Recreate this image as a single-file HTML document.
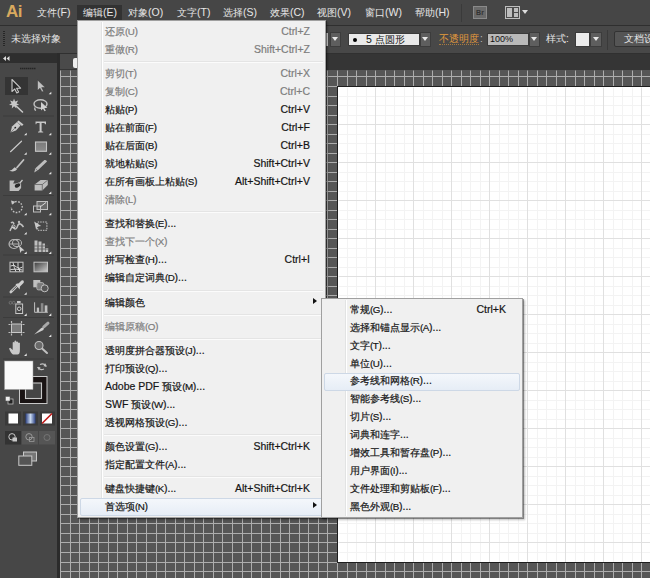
<!DOCTYPE html><html><head><meta charset="utf-8"><style>
*{margin:0;padding:0;box-sizing:border-box}
html,body{width:650px;height:578px;overflow:hidden;background:#3a3a3a;font-family:"Liberation Sans",sans-serif;position:relative}
i{font-style:normal}
.a{position:absolute}
.c{font-size:9.8px}
.p{font-size:9.8px;letter-spacing:-0.4px}
#menubar{left:0;top:0;width:650px;height:26px;background:#464646;border-bottom:1px solid #2f2f2f}
.mb{position:absolute;top:5px;height:15px;line-height:15px;font-size:10.5px;color:#e6e6e6;white-space:nowrap}
#ctrl{left:0;top:26px;width:650px;height:28px;background:#484848;border-bottom:1px solid #303030}
#tabbar{left:59px;top:54px;width:591px;height:16px;background:#353535}
#tools{left:0;top:54px;width:57px;height:524px;background:#474747}
#toolhead{left:0;top:54px;width:57px;height:9px;background:#2f2f2f}
#gap{left:57px;top:53px;width:3px;height:525px;background:#2b2b2b}
#paste{left:60px;top:70px;width:590px;height:508px;background-color:#565656}
#art{left:337px;top:86px;width:314px;height:477px;background-color:#fff;border:1px solid #1e1e1e}
.menu{position:absolute;background:#f0f0f0;border:1px solid #a0a0a0;box-shadow:1px 1px 0 rgba(0,0,0,.35),2px 2px 2px rgba(0,0,0,.25)}
.gut{position:absolute;top:1px;bottom:1px;width:2px;border-left:1px solid #e2e3e3;border-right:1px solid #fff}
.row{position:absolute;height:17px;line-height:17px;font-size:10.5px;color:#151515;white-space:nowrap;-webkit-text-stroke:0.2px currentColor}
.row.d{color:#7d7d7d}
.sc{position:absolute;top:0;font-size:10.5px}
.sep{position:absolute;height:2px;border-top:1px solid #e4e4e4;border-bottom:1px solid #fbfbfb}
.hl{position:absolute;height:18px;border:1px solid #cdd8e6;border-radius:2px;background:linear-gradient(#f4f7fb,#e6edf6)}
.arr{position:absolute;width:0;height:0;border-top:3.5px solid transparent;border-bottom:3.5px solid transparent;border-left:4px solid #111}
</style></head><body>
<div id="menubar" class="a">
<div class="a" style="left:6px;top:3px;font-size:17px;font-weight:bold;color:#d8a95e;line-height:18px;letter-spacing:-0.5px">Ai</div>
<div class="a" style="left:77px;top:5px;width:45px;height:15px;background:#323232"></div>
<div class="mb" style="left:37px"><i class="c">文件</i>(F)</div>
<div class="mb" style="left:83px"><i class="c">编辑</i>(E)</div>
<div class="mb" style="left:128px"><i class="c">对象</i>(O)</div>
<div class="mb" style="left:177px"><i class="c">文字</i>(T)</div>
<div class="mb" style="left:223px"><i class="c">选择</i>(S)</div>
<div class="mb" style="left:270px"><i class="c">效果</i>(C)</div>
<div class="mb" style="left:317px"><i class="c">视图</i>(V)</div>
<div class="mb" style="left:365px"><i class="c">窗口</i>(W)</div>
<div class="mb" style="left:415px"><i class="c">帮助</i>(H)</div>
<div class="a" style="left:461px;top:4px;width:1px;height:18px;background:#3a3a3a"></div>
<div class="a" style="left:473px;top:6px;width:14px;height:13px;background:#6a6a6a;border:1px solid #8a8a8a;font-size:7px;color:#333;text-align:center;line-height:11px;font-weight:bold">Br</div>
<div class="a" style="left:505px;top:6px;width:15px;height:13px;border:1px solid #bdbdbd;background:#4b4b4b"></div>
<div class="a" style="left:507px;top:8px;width:5px;height:9px;background:#bdbdbd"></div>
<div class="a" style="left:514px;top:8px;width:4px;height:4px;background:#bdbdbd"></div>
<div class="a" style="left:514px;top:13px;width:4px;height:4px;background:#bdbdbd"></div>
<div class="arr" style="left:522px;top:10px;border-left:3px solid transparent;border-right:3px solid transparent;border-top:4px solid #ddd;border-bottom:0"></div>
</div>
<div id="ctrl" class="a">
<div class="a" style="left:3px;top:5px;width:2px;height:16px;background:repeating-linear-gradient(#262626 0 1px,#4a4a4a 1px 2px)"></div>
<div class="a" style="left:11px;top:5px;height:16px;line-height:16px;color:#e4e4e4;font-size:10px;white-space:nowrap">未选择对象</div>
<div class="a" style="left:322px;top:7px;width:6px;height:13px;background:#cfcfcf"></div>
<div class="a" style="left:330px;top:6px;width:11px;height:15px;background:#5e5e5e;border:1px solid #3c3c3c"></div><div class="arr" style="left:332px;top:11px;border-left:3px solid transparent;border-right:3px solid transparent;border-top:4px solid #e8e8e8;border-bottom:0"></div>
<div class="a" style="left:348px;top:7px;width:72px;height:13px;background:#e9e9e9;border:1px solid #3a3a3a"></div>
<div class="a" style="left:353px;top:12px;width:4px;height:4px;border-radius:50%;background:#000"></div>
<div class="a" style="left:366px;top:7px;height:13px;line-height:13px;font-size:10.5px;color:#111;white-space:nowrap">5 <i class="c">点圆形</i></div>
<div class="a" style="left:420px;top:6px;width:11px;height:15px;background:#5e5e5e;border:1px solid #3c3c3c"></div><div class="arr" style="left:422px;top:11px;border-left:3px solid transparent;border-right:3px solid transparent;border-top:4px solid #e8e8e8;border-bottom:0"></div>
<div class="a" style="left:439px;top:5px;height:16px;line-height:15px;font-size:10px;color:#e39a3c;white-space:nowrap">不透明度</div>
<div class="a" style="left:439px;top:18px;width:40px;height:1px;border-top:1px dotted #a87a40"></div>
<div class="a" style="left:480px;top:5px;height:16px;line-height:15px;font-size:10px;color:#bbb">:</div>
<div class="a" style="left:487px;top:7px;width:42px;height:13px;background:#b9b9b9;border:1px solid #3a3a3a;font-size:9px;line-height:11px;color:#111;padding-left:2px">100%</div>
<div class="a" style="left:529px;top:6px;width:11px;height:15px;background:#5e5e5e;border:1px solid #3c3c3c"></div><div class="arr" style="left:531px;top:11px;border-left:3px solid transparent;border-right:3px solid transparent;border-top:4px solid #e8e8e8;border-bottom:0"></div>
<div class="a" style="left:546px;top:5px;height:16px;line-height:16px;font-size:10px;color:#e4e4e4;white-space:nowrap">样式:</div>
<div class="a" style="left:575px;top:6px;width:15px;height:15px;background:#ececec;border:1px solid #3a3a3a"></div>
<div class="a" style="left:590px;top:6px;width:12px;height:15px;background:#5e5e5e;border:1px solid #3c3c3c"></div><div class="arr" style="left:593px;top:11px;border-left:3px solid transparent;border-right:3px solid transparent;border-top:4px solid #e8e8e8;border-bottom:0"></div>
<div class="a" style="left:607px;top:4px;width:1px;height:20px;background:#3a3a3a"></div>
<div class="a" style="left:614px;top:5px;width:50px;height:16px;background:#555;border:1px solid #333;border-radius:2px"></div>
<div class="a" style="left:624px;top:5px;height:16px;line-height:16px;font-size:10px;color:#e4e4e4;white-space:nowrap">文档设置</div>
</div>
<div id="tabbar" class="a"></div><div class="a" style="left:60px;top:54px;width:200px;height:15px;background:#4a4a4a"></div><div class="a" style="left:73px;top:58px;width:4px;height:10px;background:#eee;border-radius:2px 0 0 2px"></div>
<div id="tools" class="a"></div><div id="gap" class="a"></div>
<svg class="a" style="left:0;top:0" width="57" height="578"><rect x="0" y="54" width="57" height="9" fill="#2e2e2e"/><path d="M3 58.5l3 -2.5v5z M6.5 58.5l3 -2.5v5z" fill="#dcdcdc"/><path d="M20 68.5h16" stroke="#252525" stroke-width="1.5" stroke-dasharray="1.5 0.5"/><path d="M3 116.0h51" stroke="#3c3c3c" stroke-width="1"/><path d="M3 195.5h51" stroke="#3c3c3c" stroke-width="1"/><path d="M3 255.0h51" stroke="#3c3c3c" stroke-width="1"/><path d="M3 297.0h51" stroke="#3c3c3c" stroke-width="1"/><path d="M3 317.5h51" stroke="#3c3c3c" stroke-width="1"/><path d="M3 359.0h51" stroke="#3c3c3c" stroke-width="1"/><rect x="5" y="77" width="23" height="18" fill="#343434"/><path d="M12 79.5v12l2.8 -2.6l2 4l1.8 -0.9l-2 -3.8h4z" fill="#2a2a2a" stroke="#c8c8c8" stroke-width="1.1" stroke-linejoin="round"/><path d="M37.5 80v10.5l2.5 -2.3l2 3.8l1.6 -0.8l-1.9 -3.6h3.6z" fill="#c0c0c0" stroke="#222" stroke-width="0.4"/><path d="M48.7 94.3l2.6 -2.6v2.6z" fill="#e8e8e8"/><path d="M14 98.5l1.2 3l3 -1l-1.6 2.8l2.6 1.6l-3.2 0.4l0.4 3.2l-2.3 -2.2l-2.3 2.2l0.4 -3.2l-3.2 -0.4l2.6 -1.6l-1.6 -2.8l3 1z" fill="#c8c8c8"/><path d="M15 105l7.5 7" stroke="#c8c8c8" stroke-width="1.6" stroke-linecap="round"/><ellipse cx="40.5" cy="104" rx="6.5" ry="4.2" fill="none" stroke="#c0c0c0" stroke-width="1.4"/><path d="M35 107.5q-1 2 1 3" fill="none" stroke="#c0c0c0" stroke-width="1.2"/><path d="M41 102v8.5l2 -1.8l1.6 2.6l1.2 -0.6l-1.4 -2.6h3z" fill="#cfcfcf"/><path d="M10.5 132.5l1.5 -6l5 -4.5l3.5 3.5l-4.5 5z" fill="#c8c8c8"/><path d="M18.5 120.5l5 4l-1.5 1.6l-5 -4z" fill="#c8c8c8"/><circle cx="15.3" cy="127.6" r="0.9" fill="#222"/><path d="M10.5 132.5l4.3 -4.3" stroke="#555" stroke-width="0.6"/><path d="M24.1 135.3l2.6 -2.6v2.6z" fill="#e8e8e8"/><path d="M35.5 121.5h10.5v2.8h-1l-0.6 -1.4h-2.8v8.3l1.6 0.6v0.8h-5.2v-0.8l1.6 -0.6v-8.3h-2.8l-0.6 1.4h-0.6z" fill="#c8c8c8"/><path d="M48.7 135.3l2.6 -2.6v2.6z" fill="#e8e8e8"/><path d="M10.5 151.7l11 -10.5" stroke="#c8c8c8" stroke-width="1.2" stroke-linecap="round"/><path d="M24.1 154.8l2.6 -2.6v2.6z" fill="#e8e8e8"/><defs><linearGradient id="rg" x1="0" y1="0" x2="0" y2="1"><stop offset="0" stop-color="#7a7a7a"/><stop offset="1" stop-color="#8c8c8c"/></linearGradient><linearGradient id="gg" x1="0" y1="0" x2="1" y2="1"><stop offset="0" stop-color="#3a3a3a"/><stop offset="1" stop-color="#cfcfcf"/></linearGradient></defs><rect x="35.5" y="142" width="11" height="9.3" fill="url(#rg)" stroke="#c4c4c4" stroke-width="1.1"/><path d="M48.7 154.8l2.6 -2.6v2.6z" fill="#e8e8e8"/><path d="M23.5 160l-6.5 7.5" stroke="#c0c0c0" stroke-width="1.8" stroke-linecap="round"/><path d="M9.2 170.8q3 -0.5 5.5 -3.5l2.5 1.8q-2 3.5 -8 1.7z" fill="#c8c8c8"/><path d="M34.2 172.5l1.2 -4.2l9 -8.2q2 -0.6 2.6 1.4l-8.8 8.6z" fill="#bdbdbd"/><path d="M35.4 168.3l3.4 3.8" stroke="#5a5a5a" stroke-width="0.6"/><path d="M48.7 174.3l2.6 -2.6v2.6z" fill="#e8e8e8"/><path d="M9.6 180.5h5l-1.5 3h8v4.5l-2.5 3h-9z" fill="#bdbdbd"/><path d="M14 187.5q2 -4 6 -4.5l2.5 -3" fill="none" stroke="#c8c8c8" stroke-width="1.3"/><ellipse cx="17.5" cy="185.5" rx="3" ry="1.8" fill="#2a2a2a" transform="rotate(-25 17.5 185.5)"/><path d="M34.6 184.5l6 -4.5h7.2v5l-5.5 5.5h-7.7z" fill="#bdbdbd"/><path d="M34.6 184.5h7.7v6 M42.3 184.5l5.5 -4.5" fill="none" stroke="#555" stroke-width="0.7"/><path d="M48.7 194.0l2.6 -2.6v2.6z" fill="#e8e8e8"/><path d="M12.5 203.5a5.5 5.5 0 1 1 -1.3 3.5" fill="none" stroke="#c0c0c0" stroke-width="1.4" stroke-dasharray="1.6 1.4"/><path d="M11 200.5l4.5 1.2l-3.5 3z" fill="#c8c8c8"/><path d="M24.1 215.3l2.6 -2.6v2.6z" fill="#e8e8e8"/><rect x="37" y="201.5" width="10.5" height="8" fill="#6a6a6a" stroke="#c0c0c0" stroke-width="1"/><rect x="33.5" y="206" width="7" height="6" fill="none" stroke="#c0c0c0" stroke-width="1"/><path d="M40 207l6 -4.5" stroke="#dcdcdc" stroke-width="1"/><path d="M48.7 215.3l2.6 -2.6v2.6z" fill="#e8e8e8"/><path d="M10 231q2 -6 4 -3q2 3 4 -3q2 -3 5.5 2 M11 223q2 -2 3 1" fill="none" stroke="#c0c0c0" stroke-width="1.5"/><circle cx="13.5" cy="226.5" r="1.6" fill="none" stroke="#ddd" stroke-width="0.9"/><circle cx="19" cy="222" r="1.2" fill="#bbb"/><path d="M24.1 234.6l2.6 -2.6v2.6z" fill="#e8e8e8"/><path d="M37.7 222h9.2v8.3h-9.2z" fill="none" stroke="#c4c4c4" stroke-width="1" stroke-dasharray="1.5 1"/><path d="M34.2 221.4l7 4.5l-3.5 0.5l-1.5 3.5z" fill="#c8c8c8"/><ellipse cx="14" cy="244" rx="5" ry="4.5" fill="none" stroke="#b8b8b8" stroke-width="1.1"/><ellipse cx="17" cy="243" rx="4.5" ry="3.6" fill="none" stroke="#b8b8b8" stroke-width="1"/><path d="M9 244h10" stroke="#b8b8b8" stroke-width="0.9"/><path d="M19 245.5l5.5 5l-2.8 0.2l-1.4 2.2z" fill="#cfcfcf"/><path d="M24.1 254.0l2.6 -2.6v2.6z" fill="#e8e8e8"/><path d="M34.5 240.5h3v11.5h-3z M38.5 241.5h3v10.5h-3z M42.5 243.5h2.5v8.5h-2.5z M45.5 248h2.7v4h-2.7z" fill="#bdbdbd"/><path d="M34 246h14 M34 249h14" stroke="#5a5a5a" stroke-width="0.8"/><path d="M48.7 254.0l2.6 -2.6v2.6z" fill="#e8e8e8"/><rect x="10" y="262.2" width="13" height="9.6" fill="#3a3a3a" stroke="#c8c8c8" stroke-width="1"/><path d="M10.5 266q4 -2 6 1t6 0 M13 262.5q1 5 3 9.2 M18 262.5q-1 4 2 9.2 M10.5 269.5q5 -1 12 0.5" fill="none" stroke="#d8d8d8" stroke-width="1"/><rect x="34" y="262.2" width="13.5" height="9.6" fill="url(#gg)" stroke="#c4c4c4" stroke-width="1"/><path d="M10.8 292l7.2 -7.2" stroke="#c8c8c8" stroke-width="2.6" stroke-linecap="round"/><path d="M12 290.8l5.2 -5.2" stroke="#3a3a3a" stroke-width="0.8"/><path d="M15.5 284l3 -0.5l3 -3q1.8 -1 2.3 0.7q0.4 1.2 -0.8 2.2l-3 3l-0.5 3z" fill="#cfcfcf"/><path d="M24.1 294.8l2.6 -2.6v2.6z" fill="#e8e8e8"/><rect x="33.3" y="280" width="7" height="7.3" fill="#c0c0c0"/><rect x="36.8" y="282.6" width="7" height="7.3" rx="1.5" fill="#7a7a7a" stroke="#b5b5b5" stroke-width="0.9"/><circle cx="44.7" cy="288.3" r="3.5" fill="#555" stroke="#c0c0c0" stroke-width="1"/><circle cx="10.5" cy="302.8" r="1.4" fill="none" stroke="#888" stroke-width="0.6"/><circle cx="13.7" cy="302.8" r="1.4" fill="none" stroke="#888" stroke-width="0.6"/><rect x="17" y="301" width="3.6" height="2" fill="#c8c8c8"/><rect x="15.8" y="304" width="6.8" height="9.5" fill="#444" stroke="#c8c8c8" stroke-width="1"/><circle cx="19.2" cy="308.8" r="1.8" fill="none" stroke="#d0d0d0" stroke-width="1"/><path d="M24.1 315.9l2.6 -2.6v2.6z" fill="#e8e8e8"/><path d="M34.6 302.3v10h13.2" fill="none" stroke="#c0c0c0" stroke-width="1"/><rect x="36.8" y="307.6" width="2.3" height="4.4" fill="#c0c0c0"/><rect x="40.8" y="303.2" width="2.6" height="8.8" fill="#8a8a8a"/><rect x="44.7" y="305.4" width="2.7" height="6.6" fill="#c0c0c0"/><path d="M48.7 315.9l2.6 -2.6v2.6z" fill="#e8e8e8"/><rect x="11.5" y="324" width="10" height="8.5" fill="#7a7a7a" stroke="#c8c8c8" stroke-width="1"/><path d="M8.5 324.5h2 M22.5 324.5h2 M8.5 332.5h2 M22.5 332.5h2 M11.5 321v2 M21.5 321v2 M11.5 333.5v2 M21.5 333.5v2" stroke="#bdbdbd" stroke-width="1.2"/><path d="M34.2 334.4l7 -6.5l3.2 -1.2l-1 3.2z" fill="#cfcfcf"/><path d="M43.8 326.8l4.2 -3.6" stroke="#a8a8a8" stroke-width="3" stroke-linecap="round"/><path d="M48.7 337.0l2.6 -2.6v2.6z" fill="#e8e8e8"/><path d="M13 354.5q-2 -1 -4 -6l1.2 -0.8l2.5 2.2v-7.5q0.9 -1 1.8 0v5v-6.5q0.9 -1 1.8 0v6.5v-5.5q0.9 -1 1.8 0v5.5v-4.5q0.9 -1 1.8 0v7q0 5 -3 4.5z" fill="#c8c8c8"/><path d="M24.1 355.9l2.6 -2.6v2.6z" fill="#e8e8e8"/><path d="M41.5 348l5.5 5" stroke="#c0c0c0" stroke-width="2" stroke-linecap="round"/><circle cx="39" cy="345.5" r="4" fill="#6a6a6a" stroke="#c4c4c4" stroke-width="1.1"/><rect x="19" y="376" width="28.5" height="28" fill="#c8c8c8"/><rect x="20" y="377" width="26.5" height="26" fill="#1a1414"/><rect x="25.5" y="383" width="16" height="15.5" fill="#454545" stroke="#c8c8c8" stroke-width="1.1"/><rect x="4.5" y="361" width="28.5" height="28.5" fill="#fafafa" stroke="#9a9a9a" stroke-width="0.5"/><path d="M40 364.5q4 -2 6 2 M44 369q-4 2 -6 -2" fill="none" stroke="#c0c0c0" stroke-width="1.1"/><path d="M45 363l2 3.5l-3.5 -0.3z M39 370.5l-2 -3.5l3.5 0.3z" fill="#c0c0c0"/><rect x="8" y="399" width="5" height="5" fill="#222" stroke="#bbb" stroke-width="0.8"/><rect x="5.5" y="396.5" width="4.5" height="4.5" fill="#eee" stroke="#555" stroke-width="0.5"/><rect x="5" y="411.5" width="16" height="14" fill="#3a3a3a"/><rect x="8.5" y="413.5" width="9.5" height="10" fill="#fff"/><rect x="23" y="411.5" width="15" height="14" fill="#3a3a3a"/><defs><linearGradient id="bg2" x1="0" x2="1"><stop offset="0" stop-color="#2a3f80"/><stop offset=".5" stop-color="#c8d8f0"/><stop offset="1" stop-color="#2a3f80"/></linearGradient></defs><rect x="25.5" y="413.5" width="10" height="10" fill="url(#bg2)"/><rect x="40" y="411.5" width="15" height="14" fill="#3a3a3a"/><rect x="42" y="413.5" width="10" height="10" fill="#fff"/><path d="M42 423.5l10 -10" stroke="#c01818" stroke-width="1.6"/><rect x="5" y="431" width="16" height="13.5" fill="#333"/><rect x="22" y="431" width="16" height="13.5" fill="#555"/><rect x="39" y="431" width="16" height="13.5" fill="#555"/><circle cx="12" cy="436.8" r="3.2" fill="none" stroke="#c8c8c8" stroke-width="1"/><rect x="12.5" y="437.5" width="4.5" height="4" fill="#c8c8c8"/><circle cx="29" cy="436.8" r="3.2" fill="none" stroke="#999" stroke-width="1"/><rect x="29.5" y="437.5" width="4.5" height="4" fill="none" stroke="#999" stroke-width="0.8"/><circle cx="47" cy="437.5" r="3" fill="none" stroke="#777" stroke-width="0.9"/><rect x="23.5" y="452" width="13" height="9" fill="#777" stroke="#c8c8c8" stroke-width="1"/><rect x="18.8" y="456" width="13" height="9.3" fill="#555" stroke="#c8c8c8" stroke-width="1"/></svg>
<div id="paste" class="a"></div>
<svg class="a" style="left:60px;top:70px" width="590" height="508"><path d="M0 0V508 M10 0V508 M19 0V508 M29 0V508 M38 0V508 M48 0V508 M57 0V508 M67 0V508 M76 0V508 M86 0V508 M96 0V508 M105 0V508 M115 0V508 M124 0V508 M134 0V508 M143 0V508 M153 0V508 M162 0V508 M172 0V508 M182 0V508 M191 0V508 M201 0V508 M210 0V508 M220 0V508 M229 0V508 M239 0V508 M248 0V508 M258 0V508 M267 0V508 M277 0V508 M287 0V508 M296 0V508 M306 0V508 M315 0V508 M325 0V508 M334 0V508 M344 0V508 M353 0V508 M363 0V508 M372 0V508 M382 0V508 M391 0V508 M401 0V508 M410 0V508 M420 0V508 M429 0V508 M439 0V508 M448 0V508 M458 0V508 M467 0V508 M477 0V508 M486 0V508 M496 0V508 M505 0V508 M515 0V508 M524 0V508 M534 0V508 M543 0V508 M553 0V508 M562 0V508 M572 0V508 M581 0V508 M0 6H590 M0 16H590 M0 26H590 M0 35H590 M0 45H590 M0 54H590 M0 64H590 M0 73H590 M0 83H590 M0 92H590 M0 102H590 M0 111H590 M0 121H590 M0 130H590 M0 140H590 M0 149H590 M0 159H590 M0 168H590 M0 178H590 M0 187H590 M0 197H590 M0 206H590 M0 216H590 M0 225H590 M0 235H590 M0 244H590 M0 254H590 M0 263H590 M0 273H590 M0 282H590 M0 292H590 M0 301H590 M0 311H590 M0 320H590 M0 330H590 M0 339H590 M0 349H590 M0 358H590 M0 368H590 M0 377H590 M0 387H590 M0 396H590 M0 406H590 M0 415H590 M0 425H590 M0 434H590 M0 444H590 M0 453H590 M0 463H590 M0 472H590 M0 482H590 M0 492H590 M0 501H590" stroke="#adadad" stroke-width="1" fill="none" transform="translate(.5 .5)"/></svg>
<div id="art" class="a"></div>
<svg class="a" style="left:338px;top:87px" width="312" height="475"><g transform="translate(.5 .5)" fill="none"><path d="M9 0V475 M18 0V475 M28 0V475 M47 0V475 M56 0V475 M66 0V475 M85 0V475 M94 0V475 M104 0V475 M123 0V475 M132 0V475 M142 0V475 M161 0V475 M170 0V475 M180 0V475 M199 0V475 M208 0V475 M218 0V475 M237 0V475 M246 0V475 M256 0V475 M275 0V475 M284 0V475 M294 0V475 M0 9H312 M0 18H312 M0 28H312 M0 47H312 M0 56H312 M0 66H312 M0 85H312 M0 94H312 M0 104H312 M0 123H312 M0 132H312 M0 142H312 M0 161H312 M0 170H312 M0 180H312 M0 199H312 M0 208H312 M0 218H312 M0 237H312 M0 246H312 M0 256H312 M0 275H312 M0 284H312 M0 294H312 M0 313H312 M0 322H312 M0 332H312 M0 351H312 M0 360H312 M0 370H312 M0 389H312 M0 398H312 M0 408H312 M0 427H312 M0 436H312 M0 446H312 M0 465H312" stroke="#f3f3f3"/><path d="M37 0V475 M75 0V475 M113 0V475 M151 0V475 M189 0V475 M227 0V475 M265 0V475 M303 0V475 M0 37H312 M0 75H312 M0 113H312 M0 151H312 M0 189H312 M0 227H312 M0 265H312 M0 303H312 M0 341H312 M0 379H312 M0 417H312 M0 455H312" stroke="#e0e0e0"/></g></svg>
<div class="menu" style="left:77px;top:20px;width:249px;height:498px">
<div class="gut" style="left:23px"></div>
<div class="row d" style="left:27px;top:2.10px"><i class="c">还原</i><i class="p">(U</i>)</div>
<div class="row d" style="right:15px;top:2.10px">Ctrl+Z</div>
<div class="row d" style="left:27px;top:20.13px"><i class="c">重做</i><i class="p">(R</i>)</div>
<div class="row d" style="right:15px;top:20.13px">Shift+Ctrl+Z</div>
<div class="sep" style="left:26px;right:2px;top:40.16px"></div>
<div class="row d" style="left:27px;top:44.16px"><i class="c">剪切</i><i class="p">(T</i>)</div>
<div class="row d" style="right:15px;top:44.16px">Ctrl+X</div>
<div class="row d" style="left:27px;top:62.19px"><i class="c">复制</i><i class="p">(C</i>)</div>
<div class="row d" style="right:15px;top:62.19px">Ctrl+C</div>
<div class="row" style="left:27px;top:80.22px"><i class="c">粘贴</i><i class="p">(P</i>)</div>
<div class="row" style="right:15px;top:80.22px">Ctrl+V</div>
<div class="row" style="left:27px;top:98.25px"><i class="c">贴在前面</i><i class="p">(F</i>)</div>
<div class="row" style="right:15px;top:98.25px">Ctrl+F</div>
<div class="row" style="left:27px;top:116.28px"><i class="c">贴在后面</i><i class="p">(B</i>)</div>
<div class="row" style="right:15px;top:116.28px">Ctrl+B</div>
<div class="row" style="left:27px;top:134.31px"><i class="c">就地粘贴</i><i class="p">(S</i>)</div>
<div class="row" style="right:15px;top:134.31px">Shift+Ctrl+V</div>
<div class="row" style="left:27px;top:152.34px"><i class="c">在所有画板上粘贴</i><i class="p">(S</i>)</div>
<div class="row" style="right:15px;top:152.34px">Alt+Shift+Ctrl+V</div>
<div class="row d" style="left:27px;top:170.37px"><i class="c">清除</i><i class="p">(L</i>)</div>
<div class="sep" style="left:26px;right:2px;top:190.40px"></div>
<div class="row" style="left:27px;top:194.40px"><i class="c">查找和替换</i><i class="p">(E</i>)...</div>
<div class="row d" style="left:27px;top:212.43px"><i class="c">查找下一个</i><i class="p">(X</i>)</div>
<div class="row" style="left:27px;top:230.46px"><i class="c">拼写检查</i><i class="p">(H</i>)...</div>
<div class="row" style="right:15px;top:230.46px">Ctrl+I</div>
<div class="row" style="left:27px;top:248.49px"><i class="c">编辑自定词典</i><i class="p">(D</i>)...</div>
<div class="sep" style="left:26px;right:2px;top:268.52px"></div>
<div class="row" style="left:27px;top:272.52px"><i class="c">编辑颜色</i></div>
<div class="arr" style="left:235px;top:277.02px"></div>
<div class="sep" style="left:26px;right:2px;top:292.55px"></div>
<div class="row d" style="left:27px;top:296.55px"><i class="c">编辑原稿</i><i class="p">(O</i>)</div>
<div class="sep" style="left:26px;right:2px;top:316.58px"></div>
<div class="row" style="left:27px;top:320.58px"><i class="c">透明度拼合器预设</i><i class="p">(J</i>)...</div>
<div class="row" style="left:27px;top:338.61px"><i class="c">打印预设</i><i class="p">(Q</i>)...</div>
<div class="row" style="left:27px;top:356.64px">Adobe PDF <i class="c">预设</i><i class="p">(M</i>)...</div>
<div class="row" style="left:27px;top:374.67px">SWF <i class="c">预设</i><i class="p">(W</i>)...</div>
<div class="row" style="left:27px;top:392.70px"><i class="c">透视网格预设</i><i class="p">(G</i>)...</div>
<div class="sep" style="left:26px;right:2px;top:412.73px"></div>
<div class="row" style="left:27px;top:416.73px"><i class="c">颜色设置</i><i class="p">(G</i>)...</div>
<div class="row" style="right:15px;top:416.73px">Shift+Ctrl+K</div>
<div class="row" style="left:27px;top:434.76px"><i class="c">指定配置文件</i><i class="p">(A</i>)...</div>
<div class="sep" style="left:26px;right:2px;top:454.79px"></div>
<div class="row" style="left:27px;top:458.79px"><i class="c">键盘快捷键</i><i class="p">(K</i>)...</div>
<div class="row" style="right:15px;top:458.79px">Alt+Shift+Ctrl+K</div>
<div class="hl" style="left:2px;right:2px;top:477.02px"></div>
<div class="row" style="left:27px;top:476.82px"><i class="c">首选项</i><i class="p">(N</i>)</div>
<div class="arr" style="left:235px;top:481.32px"></div>
</div>
<div class="menu" style="left:321px;top:298px;width:202px;height:220px">
<div class="gut" style="left:23px"></div>
<div class="row" style="left:28px;top:1.80px"><i class="c">常规</i><i class="p">(G</i>)...</div>
<div class="row" style="right:16px;top:1.80px">Ctrl+K</div>
<div class="row" style="left:28px;top:19.70px"><i class="c">选择和锚点显示</i><i class="p">(A</i>)...</div>
<div class="row" style="left:28px;top:37.60px"><i class="c">文字</i><i class="p">(T</i>)...</div>
<div class="row" style="left:28px;top:55.50px"><i class="c">单位</i><i class="p">(U</i>)...</div>
<div class="hl" style="left:2px;right:2px;top:73.60px"></div>
<div class="row" style="left:28px;top:73.40px"><i class="c">参考线和网格</i><i class="p">(R</i>)...</div>
<div class="row" style="left:28px;top:91.30px"><i class="c">智能参考线</i><i class="p">(S</i>)...</div>
<div class="row" style="left:28px;top:109.20px"><i class="c">切片</i><i class="p">(S</i>)...</div>
<div class="row" style="left:28px;top:127.10px"><i class="c">词典和连字</i>...</div>
<div class="row" style="left:28px;top:145.00px"><i class="c">增效工具和暂存盘</i><i class="p">(P</i>)...</div>
<div class="row" style="left:28px;top:162.90px"><i class="c">用户界面</i><i class="p">(I</i>)...</div>
<div class="row" style="left:28px;top:180.80px"><i class="c">文件处理和剪贴板</i><i class="p">(F</i>)...</div>
<div class="row" style="left:28px;top:198.70px"><i class="c">黑色外观</i><i class="p">(B</i>)...</div>
</div>
</body></html>
